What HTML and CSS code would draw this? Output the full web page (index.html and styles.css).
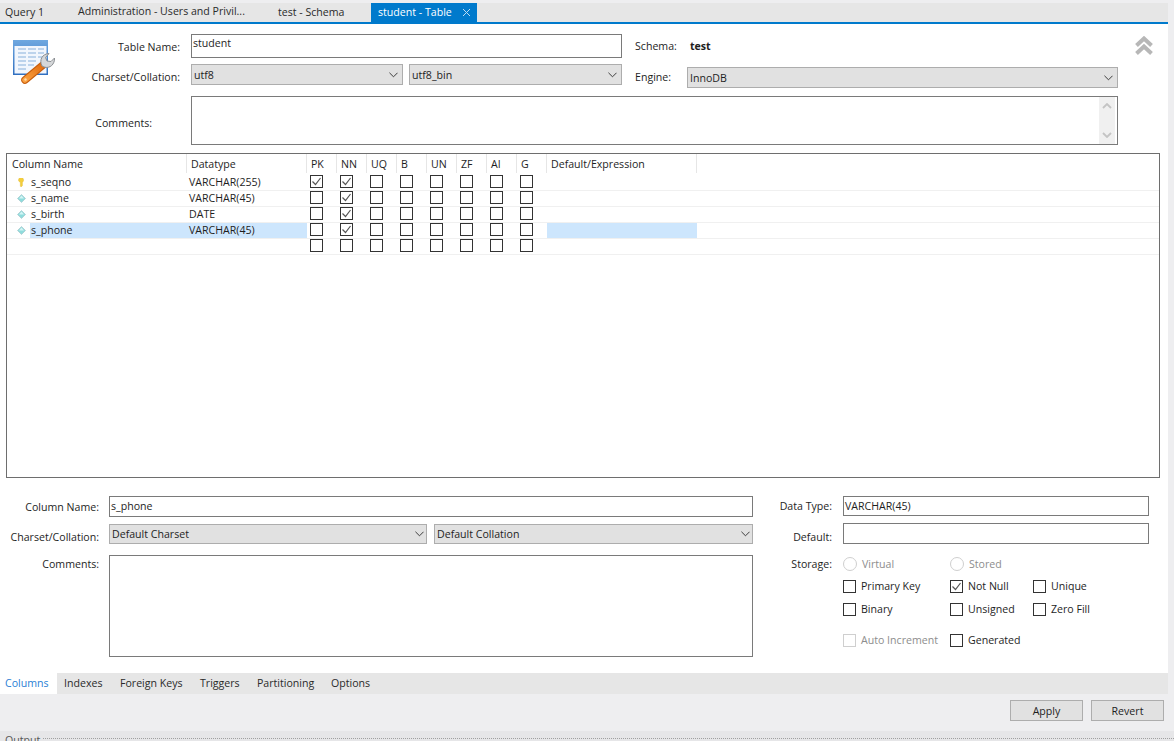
FILE: index.html
```html
<!DOCTYPE html>
<html lang="en">
<head>
<meta charset="utf-8">
<title>student - Table</title>
<link rel="stylesheet" href="styles.css">
</head>
<body>
<svg class="defs" width="0" height="0" aria-hidden="true">
  <defs>
    <symbol id="tick" viewBox="0 0 11 11"><path d="M1.500 5.500 4.500 8.500 9.500 2" fill="none" stroke="#555" stroke-width="1.200"/></symbol>
    <symbol id="chev" viewBox="0 0 10 6"><path d="M.5.5 5 5 9.500.5" fill="none" stroke="#3c3c3c" stroke-width="1.100"/></symbol>
    <symbol id="diamond" viewBox="0 0 9 9"><path d="M4.500.5 8.500 4.500 4.500 8.500.5 4.500Z" fill="#8fdcdc" stroke="#a9c6cc" stroke-width=".7"/><path d="M4.500 1.500 7 4.500H2Z" fill="#d4f4f4"/></symbol>
  </defs>
</svg>
<header class="tabbar">
  <div class="tab tab-query">Query 1</div>
  <div class="tab tab-admin"><span class="raised">Administration - Users and Privil...</span></div>
  <div class="tab tab-schema">test - Schema</div>
  <div class="tab tab-active">student - Table
    <svg class="tab-close" width="9" height="9" viewBox="0 0 9 9"><path d="M1 1 8 8M8 1 1 8" stroke="#bcdcf3" stroke-width="1"/></svg>
  </div>
</header>
<main class="panel">
  <section class="table-form">
    <svg class="table-icon" width="44" height="45" viewBox="0 0 44 45">
      <defs>
        <linearGradient id="frame" x1="0" y1="0" x2="0" y2="1"><stop offset="0" stop-color="#6fa8e0"/><stop offset="1" stop-color="#2f6fc0"/></linearGradient>
        <linearGradient id="handle" x1="0" y1="1" x2="1" y2="0"><stop offset="0" stop-color="#f9a040"/><stop offset="1" stop-color="#e26d10"/></linearGradient>
      </defs>
      <rect x="1" y="1" width="35" height="35" fill="url(#frame)"/>
      <rect x="2.500" y="7" width="32" height="27.500" fill="#f1f6fd"/>
      <g fill="#bcd3ec">
        <rect x="6" y="9" width="8" height="2"/><rect x="16" y="9" width="8" height="2"/><rect x="26" y="9" width="6" height="2"/>
        <rect x="6" y="13" width="8" height="2"/><rect x="16" y="13" width="8" height="2"/><rect x="26" y="13" width="6" height="2"/>
        <rect x="6" y="17" width="8" height="2"/><rect x="16" y="17" width="8" height="2"/><rect x="26" y="17" width="6" height="2"/>
        <rect x="6" y="21" width="8" height="2"/><rect x="16" y="21" width="8" height="2"/>
        <rect x="6" y="25" width="8" height="2"/><rect x="16" y="25" width="6" height="2"/>
        <rect x="6" y="29" width="8" height="2"/>
      </g>
      <path d="M13 41 31 26" stroke="#c75d0c" stroke-width="7.500" stroke-linecap="round"/>
      <path d="M13 41 31 26" stroke="url(#handle)" stroke-width="5.500" stroke-linecap="round"/>
      <circle cx="13.500" cy="40.500" r="1.200" fill="#ffd9a8"/>
      <path d="M30 27 C27 21 30 15 37 14.500 L33.500 18.500 35 22 39 22.500 42.500 19 C43 25 38 30 32 28Z" fill="#d5d7d9" stroke="#8b8f93" stroke-width="1"/>
    </svg>
    <label class="lbl lbl-name">Table Name:</label>
    <div class="field field-name">student</div>
    <label class="lbl lbl-schema">Schema:</label>
    <strong class="schema-value">test</strong>
    <svg class="collapse" width="20" height="20" viewBox="0 0 20 20"><path d="M2.500 9.500 10 2.500 17.500 9.500M2.500 17.500 10 10.500 17.500 17.500" fill="none" stroke="#b7b7b7" stroke-width="4"/></svg>

    <label class="lbl lbl-charset">Charset/Collation:</label>
    <div class="select sel-charset">utf8<svg class="chev"><use href="#chev"/></svg></div>
    <div class="select sel-collation">utf8_bin<svg class="chev"><use href="#chev"/></svg></div>
    <label class="lbl lbl-engine">Engine:</label>
    <div class="select sel-engine">InnoDB<svg class="chev"><use href="#chev"/></svg></div>

    <label class="lbl lbl-comments">Comments:</label>
    <div class="field field-comments">
      <div class="scrollbar">
        <svg width="10" height="6" viewBox="0 0 10 6"><path d="M1 5 5 1 9 5" fill="none" stroke="#c4c4c4" stroke-width="1.800"/></svg>
        <svg width="10" height="6" viewBox="0 0 10 6"><path d="M1 1 5 5 9 1" fill="none" stroke="#c4c4c4" stroke-width="1.800"/></svg>
      </div>
    </div>
  </section>

  <section class="grid-box">
    <div class="row head">
      <div class="hc hc-name">Column Name</div><div class="hc">Datatype</div><div class="hc">PK</div><div class="hc">NN</div><div class="hc">UQ</div><div class="hc">B</div><div class="hc">UN</div><div class="hc">ZF</div><div class="hc">AI</div><div class="hc">G</div><div class="hc">Default/Expression</div>
    </div>
    <div class="row">
      <div class="c-name"><svg class="ci" width="9" height="10" viewBox="0 0 9 10"><path d="M1.500 3.500a2.800 2.800 0 1 1 5 0L5.500 5V8.500L4 10 3.200 9V5Z" fill="#f5cf3b" stroke="#e0b93a" stroke-width=".5"/></svg><span class="cn">s_seqno</span></div>
      <div class="c-type">VARCHAR(255)</div>
      <div class="c-chk"><i class="box"><svg><use href="#tick"/></svg></i></div><div class="c-chk"><i class="box"><svg><use href="#tick"/></svg></i></div>
      <div class="c-chk"><i class="box"></i></div><div class="c-chk"><i class="box"></i></div><div class="c-chk"><i class="box"></i></div><div class="c-chk"><i class="box"></i></div><div class="c-chk"><i class="box"></i></div><div class="c-chk"><i class="box"></i></div>
      <div class="c-def"></div>
    </div>
    <div class="row">
      <div class="c-name"><svg class="ci"><use href="#diamond"/></svg><span class="cn">s_name</span></div>
      <div class="c-type">VARCHAR(45)</div>
      <div class="c-chk"><i class="box"></i></div><div class="c-chk"><i class="box"><svg><use href="#tick"/></svg></i></div>
      <div class="c-chk"><i class="box"></i></div><div class="c-chk"><i class="box"></i></div><div class="c-chk"><i class="box"></i></div><div class="c-chk"><i class="box"></i></div><div class="c-chk"><i class="box"></i></div><div class="c-chk"><i class="box"></i></div>
      <div class="c-def"></div>
    </div>
    <div class="row">
      <div class="c-name"><svg class="ci"><use href="#diamond"/></svg><span class="cn">s_birth</span></div>
      <div class="c-type">DATE</div>
      <div class="c-chk"><i class="box"></i></div><div class="c-chk"><i class="box"><svg><use href="#tick"/></svg></i></div>
      <div class="c-chk"><i class="box"></i></div><div class="c-chk"><i class="box"></i></div><div class="c-chk"><i class="box"></i></div><div class="c-chk"><i class="box"></i></div><div class="c-chk"><i class="box"></i></div><div class="c-chk"><i class="box"></i></div>
      <div class="c-def"></div>
    </div>
    <div class="row selected">
      <div class="c-name"><svg class="ci"><use href="#diamond"/></svg><span class="cn">s_phone</span></div>
      <div class="c-type">VARCHAR(45)</div>
      <div class="c-chk"><i class="box"></i></div><div class="c-chk"><i class="box"><svg><use href="#tick"/></svg></i></div>
      <div class="c-chk"><i class="box"></i></div><div class="c-chk"><i class="box"></i></div><div class="c-chk"><i class="box"></i></div><div class="c-chk"><i class="box"></i></div><div class="c-chk"><i class="box"></i></div><div class="c-chk"><i class="box"></i></div>
      <div class="c-def"></div>
    </div>
    <div class="row">
      <div class="c-name"></div>
      <div class="c-type"></div>
      <div class="c-chk"><i class="box"></i></div><div class="c-chk"><i class="box"></i></div>
      <div class="c-chk"><i class="box"></i></div><div class="c-chk"><i class="box"></i></div><div class="c-chk"><i class="box"></i></div><div class="c-chk"><i class="box"></i></div><div class="c-chk"><i class="box"></i></div><div class="c-chk"><i class="box"></i></div>
      <div class="c-def"></div>
    </div>
  </section>

  <section class="detail">
    <div class="detail-left">
      <label class="dl">Column Name:</label>
      <div class="field d-name">s_phone</div>
      <label class="dl dl-charset">Charset/Collation:</label>
      <div class="select">Default Charset<svg class="chev"><use href="#chev"/></svg></div>
      <div class="select d-coll">Default Collation<svg class="chev"><use href="#chev"/></svg></div>
      <label class="dl dl-top">Comments:</label>
      <div class="field d-comments"></div>
    </div>
    <div class="detail-right">
      <label class="dr">Data Type:</label>
      <div class="field">VARCHAR(45)</div>
      <label class="dr dr-default">Default:</label>
      <div class="field"></div>
      <label class="dr dr-storage">Storage:</label>
      <div class="opts">
        <div class="opt off"><i class="radio"></i>Virtual</div>
        <div class="opt off span2"><i class="radio"></i>Stored</div>
        <div class="opt"><i class="box"></i>Primary Key</div>
        <div class="opt"><i class="box"><svg><use href="#tick"/></svg></i>Not Null</div>
        <div class="opt"><i class="box"></i>Unique</div>
        <div class="opt"><i class="box"></i>Binary</div>
        <div class="opt"><i class="box"></i>Unsigned</div>
        <div class="opt"><i class="box"></i>Zero Fill</div>
        <div class="opt off"><i class="box"></i>Auto Increment</div>
        <div class="opt span2"><i class="box"></i>Generated</div>
      </div>
    </div>
  </section>

  <nav class="subtabs">
    <div class="st st-active">Columns</div>
    <div class="st st-idx">Indexes</div>
    <div class="st st-fk">Foreign Keys</div>
    <div class="st st-tr">Triggers</div>
    <div class="st st-pa">Partitioning</div>
    <div class="st">Options</div>
  </nav>
</main>
<div class="actions">
  <button class="btn">Apply</button>
  <button class="btn">Revert</button>
</div>
<footer class="output"><span>Output</span><i class="dots"></i></footer>
</body>
</html>
```
FILE: styles.css
```css
* { box-sizing: border-box; }
html, body { margin: 0; padding: 0; }
body {
  width: 1174px; height: 741px; overflow: hidden;
  background: #eeeef0; color: #1e1e1e;
  font: 10.6px/14px "Open Sans", "Noto Sans", sans-serif;
}
.defs { display: block; height: 0; }

/* top tabs */
.tabbar {
  display: flex; width: 1168px; height: 21px; margin-top: 3px;
  background: #e6e6e6; border-bottom: 2px solid #007acc; align-items: stretch;
}
.tab { display: flex; align-items: center; padding: 0 0 1px 7px; color: #2a2a2a; }
.tab-query { width: 71px; padding-left: 5px; }
.tab-admin { width: 200px; }
.tab-schema { width: 100px; }
.tab-active { width: 106px; background: #007acc; color: #fff; }
.raised { position: relative; top: -1px; }
.tab-close { margin-left: 10px; }

/* white panel */
.panel { width: 1168px; height: 670px; background: #fff; display: flex; flex-direction: column; }

.table-form {
  display: grid; flex: none;
  grid-template-columns: 191px 212px 6px 213px 65px 431px 50px;
  grid-template-rows: 24px 21px 49px;
  row-gap: 6px;
  padding-top: 10px; height: 129px;
  align-items: center;
}
.table-icon { grid-column: 1; grid-row: 1 / span 2; justify-self: start; align-self: start; margin: 5px 0 0 12px; }
.lbl { text-align: right; padding-right: 11px; }
.lbl-name, .lbl-charset { grid-column: 1; }
.lbl-name { grid-row: 1; margin-top: 2px; }
.lbl-charset { grid-row: 2; margin-top: 4px; }
.lbl-comments { grid-column: 1; grid-row: 3; padding-right: 39px; align-self: start; margin-top: 25px; }
.field-name { grid-column: 2 / span 3; grid-row: 1; }
.lbl-schema { grid-column: 5; grid-row: 1; text-align: left; padding-left: 13px; padding-right: 0; }
.schema-value { grid-column: 6; grid-row: 1; padding-left: 3px; font-weight: 700; }
.collapse { grid-column: 7; grid-row: 1; margin-left: 16px; }
.sel-charset { grid-column: 2; grid-row: 2; }
.sel-collation { grid-column: 4; grid-row: 2; }
.lbl-engine { grid-column: 5; grid-row: 2; text-align: left; padding-left: 13px; padding-right: 0; margin-top: 4px; }
.sel-engine { grid-column: 6; grid-row: 2; margin-top: 6px; }
.field-comments { grid-column: 2 / span 5; grid-row: 3; align-self: start; margin-top: 5px; height: 49px; padding: 1px; display: flex; justify-content: flex-end; }

.field {
  border: 1px solid #7a7a7a; background: #fff; padding: 0 1px; height: 100%;
  white-space: nowrap;
}
.field-name { line-height: 16px; }
.select {
  display: flex; align-items: center; justify-content: space-between;
  height: 21px; background: #e1e1e1; border: 1px solid #adadad; padding: 0 4px 0 2px;
}
.chev { width: 9px; height: 6px; flex: none; }
.scrollbar {
  width: 16px; margin-right: 1px; background: #f0f0f0;
  display: flex; flex-direction: column; justify-content: space-between; align-items: center; padding: 6px 0;
}

/* columns grid */
.grid-box {
  margin: 0 8px 0 6px; height: 325px; flex: none; border: 1px solid #6e6e6e; background: #fff;
}
.row {
  display: grid;
  grid-template-columns: 180px 120px repeat(8, 30px) 150px;
  height: 16px; border-bottom: 1px solid #f0f0f0; align-items: stretch;
}
.head { height: 21px; border-bottom: 0; }
.hc { padding: 3px 0 0 4px; border-right: 1px solid #e6e6e6; height: 19px; white-space: nowrap; }
.hc-name { padding-left: 5px; }
.c-name { display: flex; align-items: center; padding-left: 10px; }
.ci { width: 9px; height: 9px; flex: none; }
.cn { flex: 1; padding-left: 1px; margin-left: 4px; line-height: 15px; height: 15px; }
.c-type { padding-left: 2px; line-height: 15px; }
.c-chk { padding: 0 0 0 3px; }
.selected .cn, .selected .c-type, .selected .c-def { background: #cde6fd; }
.box {
  display: block; width: 13px; height: 13px; border: 1px solid #333; background: #fff; flex: none;
}
.box svg { display: block; width: 11px; height: 11px; }

/* detail */
.detail { display: flex; flex: none; height: 195px; padding-top: 18px; }
.detail-left {
  width: 753px;
  display: grid; grid-template-columns: 109px 318px 7px 319px;
  grid-template-rows: 21px 20px 102px; row-gap: 7px; align-items: center; align-content: start;
}
.detail .field { line-height: 19px; }
.detail-left .select { height: 20px; padding-right: 2px; }
.d-name { grid-column: 2 / span 3; }
.d-coll { grid-column: 4; }
.d-comments { grid-column: 2 / span 3; align-self: start; margin-top: 4px; height: 102px; }
.dl { text-align: right; padding-right: 10px; }
.dl-charset { margin-top: 6px; }
.dl-top { align-self: start; margin-top: 6px; }
.detail-right {
  width: 396px;
  display: grid; grid-template-columns: 90px 306px; grid-template-rows: 20px 21px auto;
  row-gap: 7px; align-items: center; align-content: start;
}
.dr { text-align: right; padding-right: 11px; }
.dr-default { margin-top: 6px; }
.dr-storage { align-self: start; margin-top: 6px; }
.opts {
  margin-top: 2px;
  display: grid; grid-template-columns: 107px 83px 1fr;
  grid-template-rows: 22px 23px 31px 22px; align-items: start;
}
.opt { display: flex; align-items: center; gap: 5px; height: 22px; color: #1e1e1e; white-space: nowrap; }
.opt.off { color: #8d8d8d; }
.opt.off .box { border-color: #cfcfcf; }
.span2 { grid-column: span 2; }
.radio { display: block; width: 14px; height: 14px; border-radius: 50%; border: 1px solid #cfcfcf; background: #fff; }

/* sub tabs */
.subtabs { display: flex; flex: none; height: 21px; background: #e6e6e6; align-items: center; color: #2a2a2a; }
.st { line-height: 21px; padding-left: 7px; }
.st-active { width: 57px; padding-left: 5px; background: #fff; color: #2a7fd5; }
.st-idx { width: 56px; }
.st-fk { width: 80px; }
.st-tr { width: 57px; }
.st-pa { width: 74px; }

/* actions */
.actions { display: flex; justify-content: flex-end; gap: 8px; width: 1164px; height: 37px; padding-top: 6px; }
.btn {
  width: 73px; height: 21px; padding: 0; font: inherit; color: #1e1e1e;
  background: #e1e1e1; border: 1px solid #adadad;
}
.output {
  height: 10px; background: #e6e6e8; display: flex; gap: 3px; overflow: hidden; padding: 2px 0 0 5px; color: #555;
}
.dots { flex: 1; height: 0; margin-top: 5px; border-top: 1px dotted #a0a0a0; }
```
